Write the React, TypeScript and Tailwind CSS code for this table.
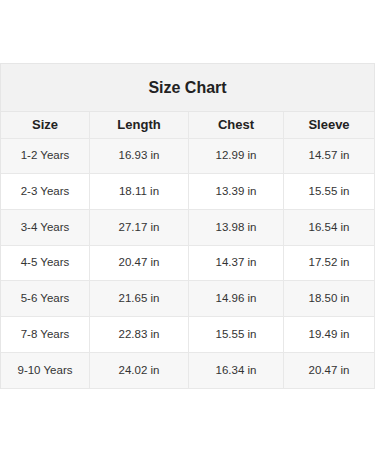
import React from "react";

const rows: [string, string, string, string][] = [
  ["1-2 Years", "16.93 in", "12.99 in", "14.57 in"],
  ["2-3 Years", "18.11 in", "13.39 in", "15.55 in"],
  ["3-4 Years", "27.17 in", "13.98 in", "16.54 in"],
  ["4-5 Years", "20.47 in", "14.37 in", "17.52 in"],
  ["5-6 Years", "21.65 in", "14.96 in", "18.50 in"],
  ["7-8 Years", "22.83 in", "15.55 in", "19.49 in"],
  ["9-10 Years", "24.02 in", "16.34 in", "20.47 in"],
];

const heights = ["h-[35px]", "h-[36px]", "h-[36px]", "h-[35px]", "h-[36px]", "h-[36px]", "h-[36px]"];

export default function App() {
  return (
    <div className="w-[375px] h-[450px] bg-white pt-[63px]" style={{ fontFamily: '"Liberation Sans", Arial, sans-serif' }}>
      <div className="w-[375px] border-t border-l border-[#e6e6e6] box-border">
        <div className="h-[48px] flex items-center justify-center bg-[#f2f2f2] border-b border-r border-[#e6e6e6] text-[16px] font-bold text-[#222]">
          Size Chart
        </div>
        <div className="grid grid-cols-[89px_99px_95px_91px] h-[27px] bg-[#f5f5f5] text-[13px] font-bold text-[#222]">
          {["Size", "Length", "Chest", "Sleeve"].map((h) => (
            <div key={h} className="flex items-center justify-center border-r border-b border-[#e8e8e8]">
              {h}
            </div>
          ))}
        </div>
        {rows.map((r, i) => (
          <div
            key={r[0]}
            className={`grid grid-cols-[89px_99px_95px_91px] ${heights[i]} ${i % 2 === 0 ? "bg-[#f7f7f7]" : "bg-white"} text-[11.5px] text-[#333]`}
          >
            {r.map((c, j) => (
              <div key={j} className="flex items-center justify-center border-r border-b border-[#e8e8e8]">
                {c}
              </div>
            ))}
          </div>
        ))}
      </div>
    </div>
  );
}
